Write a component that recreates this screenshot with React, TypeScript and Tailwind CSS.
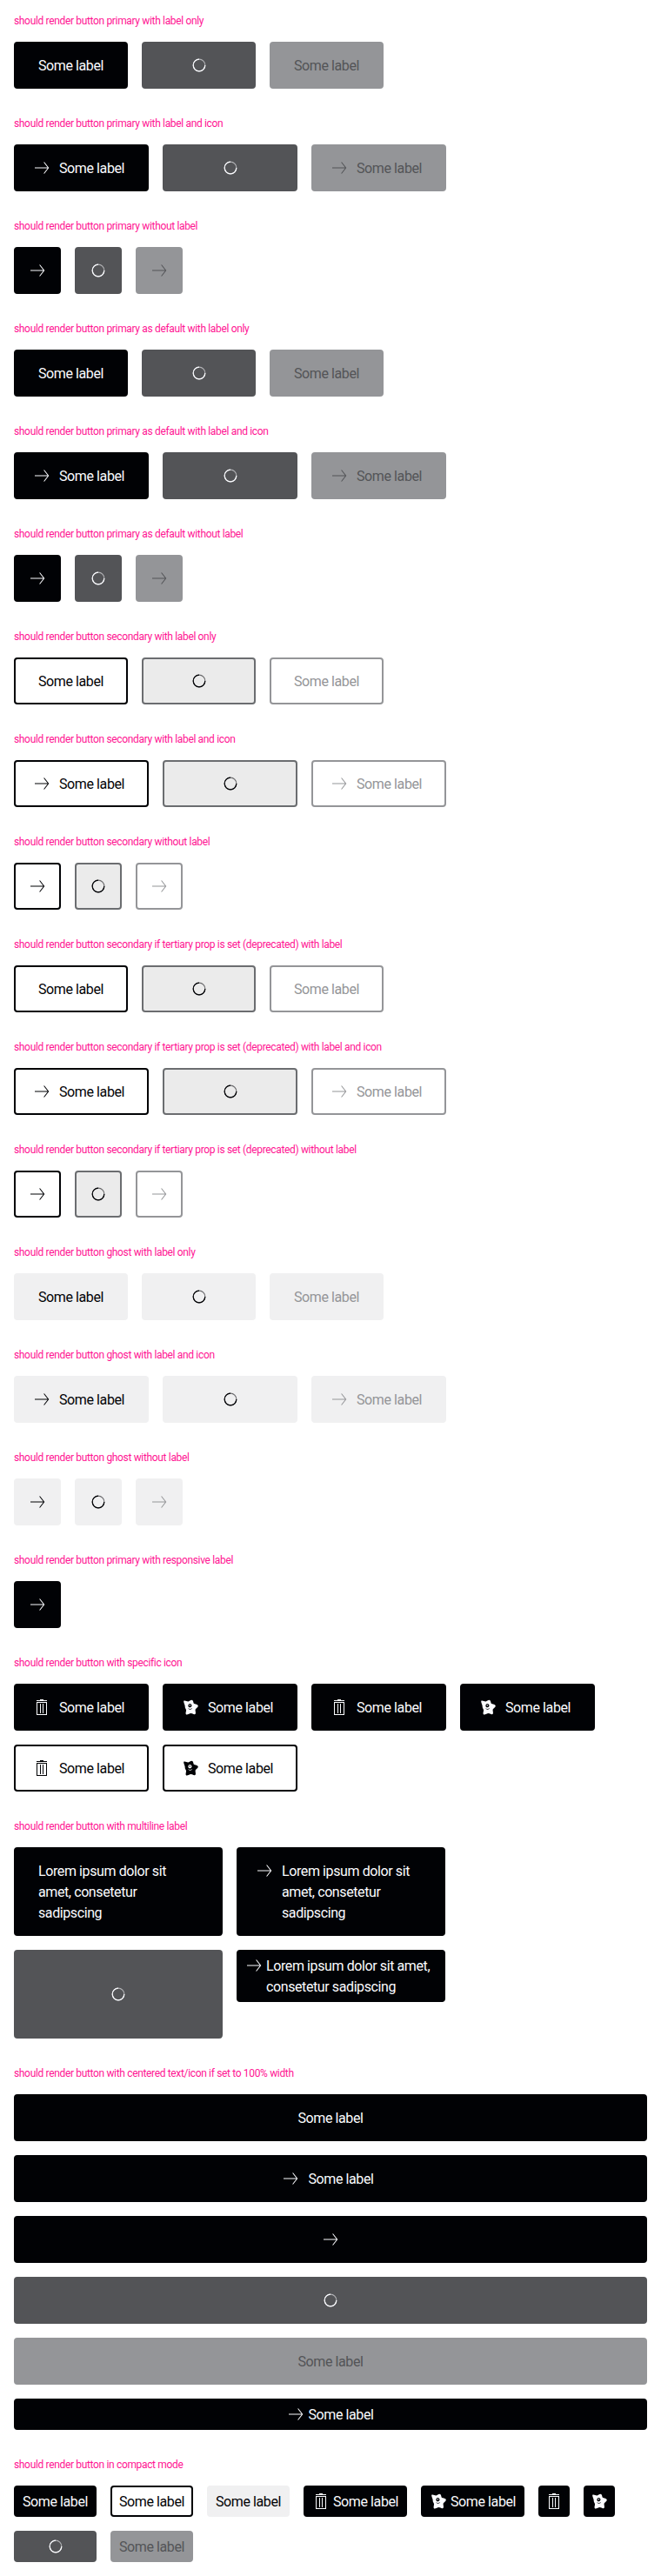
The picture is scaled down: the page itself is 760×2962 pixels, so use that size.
import React from "react";

type Variant = "primary" | "secondary" | "ghost";
type IconName = "arrow" | "trash" | "star";
type State = "normal" | "loading" | "disabled";

const tones: Record<Variant, Record<State, string>> = {
  primary: {
    normal: "bg-[#010205] border-[#010205] text-[#fbfcff]",
    loading: "bg-[#535457] border-[#535457] text-[#fbfcff]",
    disabled: "bg-[#949598] border-[#949598] text-[#535457]",
  },
  secondary: {
    normal: "bg-white border-[#010205] text-[#010205]",
    loading: "bg-[#ebebeb] border-[#6b6d70] text-[#010205]",
    disabled: "bg-white border-[#949598] text-[#949598]",
  },
  ghost: {
    normal: "bg-[#f0f0f1] border-[#f0f0f1] text-[#010205]",
    loading: "bg-[#f0f0f1] border-[#f0f0f1] text-[#010205]",
    disabled: "bg-[#f0f0f1] border-[#f0f0f1] text-[#949598]",
  },
};

function Icon({ name }: { name: IconName }) {
  return (
    <svg viewBox="0 0 24 24" className="h-6 w-6 shrink-0" fill="currentColor">
      {name === "arrow" && <path d="M14 5.600h1.200l5.100 6.400-5.100 6.400H14l4.700-5.900H4v-1h14.700z" />}
      {name === "trash" && (
        <path
          fillRule="evenodd"
          d="M10 3h4v1h4v1H6V4h4zM6 6h12v15H6zm1 1v13h10V7zM10 8h1v11h-1zM13 8h1v11h-1z"
        />
      )}
      {name === "star" && (
        <path
          fillRule="evenodd"
          d="M4.300 4.800C6 4 8 5.800 9.500 5.600c1.500-.8 2.500-2 4-1.900 1.900.2 1.600 2.600 2.300 4 1.500.9 4.900 1 5 2.700 0 1.600-2.700 2.900-3.200 4.300-.2 1.600 1.100 4.600-.3 5.400-1.500.8-3.200-1-4.700-1-1.600 0-3.900 1.900-5.400 1.300-1.500-.8.100-3.700-.2-5.300-.5-1.500-1.600-2.500-1.300-4 .1-1.800-2-4.900-1.400-6.300zM11.500 8q-2 0-2.200 2.200.1 1.500 1.300 2 2.400.5 2.900-1.700Q13.600 8.200 11.500 8zm-.8 1.200h1.200v1.300h-1.200zM9 13q2.600 2.200 5.200-.3-.7 2-2.600 2.100Q9.800 14.700 9 13z"
        />
      )}
    </svg>
  );
}

function Spinner() {
  return (
    <svg viewBox="0 0 24 24" className="h-6 w-6 shrink-0" fill="none" stroke="currentColor">
      <circle cx="12" cy="12" r="6.8" strokeWidth="1.2" opacity="0.55" />
      <path d="M18.800 12a6.800 6.800 0 1 1-6.800-6.800" strokeWidth="1.200" />
    </svg>
  );
}

interface ButtonProps {
  variant?: Variant;
  state?: State;
  icon?: IconName;
  label?: React.ReactNode;
  size: string;
  compact?: boolean;
  multiline?: boolean;
}

function paddingFor(icon: boolean, compact: boolean) {
  if (compact) return icon ? "pl-1.5 pr-2 gap-0.5" : "px-2";
  return icon ? "pl-[18px] pr-[26px] gap-2" : "px-[26px]";
}

function Button({
  variant = "primary",
  state = "normal",
  icon,
  label,
  size,
  compact = false,
  multiline = false,
}: ButtonProps) {
  const padding = !label || state === "loading" ? "" : paddingFor(Boolean(icon), compact);
  const startAligned = state !== "loading" && label && !size.includes("w-full") && (multiline || icon);
  const justify = startAligned ? "justify-start" : "justify-center";
  return (
    <button
      className={`flex shrink-0 items-center rounded-[4px] border-2 text-left text-[16px] leading-6 tracking-[-0.4px] ${tones[variant][state]} ${padding} ${justify} ${size}`}
    >
      {state === "loading" ? (
        <Spinner />
      ) : (
        <>
          {icon && (
            <span className={multiline ? "self-start" : ""}>
              <Icon name={icon} />
            </span>
          )}
          {label && <span className="whitespace-nowrap pt-0.5">{label}</span>}
        </>
      )}
    </button>
  );
}

function Section({ title, children }: { title: string; children: React.ReactNode }) {
  return (
    <section>
      <h2 className="mb-4 h-4 whitespace-nowrap text-[12px] leading-4 tracking-[-0.34px] text-[#ff1493]">{title}</h2>
      <div className="flex flex-wrap items-start gap-4">{children}</div>
    </section>
  );
}

const states: State[] = ["normal", "loading", "disabled"];

const groups: { title: string; variant: Variant; kind: "label" | "both" | "icon" }[] = [
  { title: "should render button primary with label only", variant: "primary", kind: "label" },
  { title: "should render button primary with label and icon", variant: "primary", kind: "both" },
  { title: "should render button primary without label", variant: "primary", kind: "icon" },
  { title: "should render button primary as default with label only", variant: "primary", kind: "label" },
  { title: "should render button primary as default with label and icon", variant: "primary", kind: "both" },
  { title: "should render button primary as default without label", variant: "primary", kind: "icon" },
  { title: "should render button secondary with label only", variant: "secondary", kind: "label" },
  { title: "should render button secondary with label and icon", variant: "secondary", kind: "both" },
  { title: "should render button secondary without label", variant: "secondary", kind: "icon" },
  { title: "should render button secondary if tertiary prop is set (deprecated) with label", variant: "secondary", kind: "label" },
  { title: "should render button secondary if tertiary prop is set (deprecated) with label and icon", variant: "secondary", kind: "both" },
  { title: "should render button secondary if tertiary prop is set (deprecated) without label", variant: "secondary", kind: "icon" },
  { title: "should render button ghost with label only", variant: "ghost", kind: "label" },
  { title: "should render button ghost with label and icon", variant: "ghost", kind: "both" },
  { title: "should render button ghost without label", variant: "ghost", kind: "icon" },
];

const sizes = {
  label: "h-[54px] w-[131px]",
  both: "h-[54px] w-[155px]",
  icon: "h-[54px] w-[54px]",
  full: "h-[54px] w-full",
  fullCompact: "h-9 w-full",
  tall: "h-[102px] w-[240px]",
  tallCompact: "h-[60px] w-[240px]",
  compactLabel: "h-9 w-[95px]",
  compactBoth: "h-9 w-[119px]",
  compactIcon: "h-9 w-9",
};

const threeLines = (
  <>
    Lorem ipsum dolor sit
    <br />
    amet, consetetur
    <br />
    sadipscing
  </>
);

const twoLines = (
  <>
    Lorem ipsum dolor sit amet,
    <br />
    consetetur sadipscing
  </>
);

export default function App() {
  return (
    <main className="flex min-h-[2962px] flex-col gap-8 bg-white p-4 font-['Roboto',sans-serif]">
      {groups.map((g) => (
        <Section key={g.title} title={g.title}>
          {states.map((state) => (
            <Button
              key={state}
              variant={g.variant}
              state={state}
              icon={g.kind === "label" ? undefined : "arrow"}
              label={g.kind === "icon" ? undefined : "Some label"}
              size={sizes[g.kind]}
            />
          ))}
        </Section>
      ))}

      <Section title="should render button primary with responsive label">
        <Button icon="arrow" size={sizes.icon} />
      </Section>

      <Section title="should render button with specific icon">
        <Button icon="trash" label="Some label" size={sizes.both} />
        <Button icon="star" label="Some label" size={sizes.both} />
        <Button icon="trash" label="Some label" size={sizes.both} />
        <Button icon="star" label="Some label" size={sizes.both} />
        <Button variant="secondary" icon="trash" label="Some label" size={sizes.both} />
        <Button variant="secondary" icon="star" label="Some label" size={sizes.both} />
      </Section>

      <Section title="should render button with multiline label">
        <div className="grid grid-cols-[240px_240px] items-start gap-4">
          <Button multiline label={threeLines} size={sizes.tall} />
          <Button multiline icon="arrow" label={threeLines} size={`${sizes.tall} py-[13px]`} />
          <Button state="loading" size={sizes.tall} />
          <Button multiline compact icon="arrow" label={twoLines} size={`${sizes.tallCompact} py-1`} />
        </div>
      </Section>

      <Section title="should render button with centered text/icon if set to 100% width">
        <Button label="Some label" size={sizes.full} />
        <Button icon="arrow" label="Some label" size={sizes.full} />
        <Button icon="arrow" size={sizes.full} />
        <Button state="loading" size={sizes.full} />
        <Button state="disabled" label="Some label" size={sizes.full} />
        <Button compact icon="arrow" label="Some label" size={sizes.fullCompact} />
      </Section>

      <Section title="should render button in compact mode">
        <Button compact label="Some label" size={sizes.compactLabel} />
        <Button compact variant="secondary" label="Some label" size={sizes.compactLabel} />
        <Button compact variant="ghost" label="Some label" size={sizes.compactLabel} />
        <Button compact icon="trash" label="Some label" size={sizes.compactBoth} />
        <Button compact icon="star" label="Some label" size={sizes.compactBoth} />
        <Button compact icon="trash" size={sizes.compactIcon} />
        <Button compact icon="star" size={sizes.compactIcon} />
        <Button compact state="loading" size={sizes.compactLabel} />
        <Button compact state="disabled" label="Some label" size={sizes.compactLabel} />
      </Section>
    </main>
  );
}
